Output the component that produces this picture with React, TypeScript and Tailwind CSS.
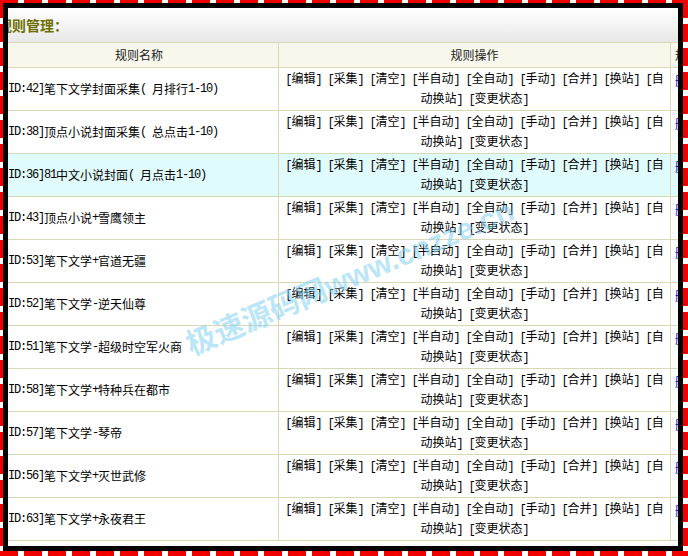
import React from 'react';

const rules = [
  { id: 42, name: '笔下文学封面采集( 月排行1-10)' },
  { id: 38, name: '顶点小说封面采集( 总点击1-10)' },
  { id: 36, name: '81中文小说封面( 月点击1-10)', active: true },
  { id: 43, name: '顶点小说+雪鹰领主' },
  { id: 53, name: '笔下文学+官道无疆' },
  { id: 52, name: '笔下文学-逆天仙尊' },
  { id: 51, name: '笔下文学-超级时空军火商' },
  { id: 58, name: '笔下文学+特种兵在都市' },
  { id: 57, name: '笔下文学-琴帝' },
  { id: 56, name: '笔下文学+灭世武修' },
  { id: 63, name: '笔下文学+永夜君王' },
];

const actions = '[编辑] [采集] [清空] [半自动] [全自动] [手动] [合并] [换站] [自动换站] [变更状态]';

// half-width latin runs rendered narrow, like the old 宋体 pages
function Sim({ text }: { text: string }) {
  const parts = text.split(/([\x20-\x7e]+)/);
  return (
    <>
      {parts.map((p, i) =>
        /^[\x20-\x7e]+$/.test(p) ? (
          <span key={i} className="font-['Liberation_Mono'] tracking-[-1.2px] whitespace-pre-wrap">
            {p}
          </span>
        ) : (
          <React.Fragment key={i}>{p}</React.Fragment>
        )
      )}
    </>
  );
}

export default function App() {
  return (
    <div className="w-[688px] h-[556px] pt-[3px] pl-[3px] pr-[5px] pb-[5px] [background-image:repeating-linear-gradient(90deg,#f20000_0_18px,#fff_18px_24px),repeating-linear-gradient(90deg,#f20000_0_18px,#fff_18px_24px),repeating-linear-gradient(180deg,#f20000_0_18px,#fff_18px_24px),repeating-linear-gradient(180deg,#f20000_0_18px,#fff_18px_24px)] [background-size:100%_3px,100%_5px,3px_100%,5px_100%] [background-position:0_0,0_100%,0_0,100%_0] [background-repeat:no-repeat]">
      <div className="h-full border-[5px] border-black bg-white overflow-hidden relative font-['Noto_Sans_CJK_SC',sans-serif] text-[12px] text-black">
        <div className="-ml-[8px] w-[780px]">
          {/* Title */}
          <div className="h-[35px] flex items-center border-b border-[#d8d8b4] bg-linear-to-b from-white to-[#e8e8e8]">
            <span className="-ml-[2px] text-[14px] font-bold text-[#6e6e00]">规则管理：</span>
          </div>

          {/* Header */}
          <div className="grid grid-cols-[279px_392px_109px] h-[25px] bg-[#f7f7ec] border-b border-[#d8d8b4] text-[#222]">
            <div className="border-r border-[#d8d8b4] flex items-center justify-center">规则名称</div>
            <div className="border-r border-[#d8d8b4] flex items-center justify-center">规则操作</div>
            <div className="flex items-center pl-[4px]">规则状态</div>
          </div>

          {/* Rows */}
          {rules.map((r) => (
            <div
              key={r.id}
              className={`grid grid-cols-[279px_392px_109px] h-[43px] border-b border-[#d8d8b4] ${
                r.active ? 'bg-[#e0fbfc]' : 'bg-white'
              }`}
            >
              <div className="border-r border-[#d8d8b4] flex items-center pl-[2px] whitespace-nowrap">
                <Sim text={`[ID:${r.id}]${r.name}`} />
              </div>
              <div className="border-r border-[#d8d8b4] flex items-center justify-center text-center px-[5px] leading-[17px]">
                <span>
                  <Sim text={actions} />
                </span>
              </div>
              <div className="pt-[4px] pl-[4px] leading-[17px] text-[#0000cc]">删除</div>
            </div>
          ))}
          <div className="h-[20px] bg-white" />
        </div>

        {/* watermark */}
        <div className="absolute left-[157px] top-[252px] w-[370px] -rotate-[23deg] text-center text-[30px] leading-[36px] font-bold text-[#7fd0f2]/55 font-['Liberation_Sans','Noto_Sans_CJK_SC',sans-serif] whitespace-nowrap pointer-events-none select-none">
          极速源码网www.cnzze.cn
        </div>
      </div>
    </div>
  );
}
